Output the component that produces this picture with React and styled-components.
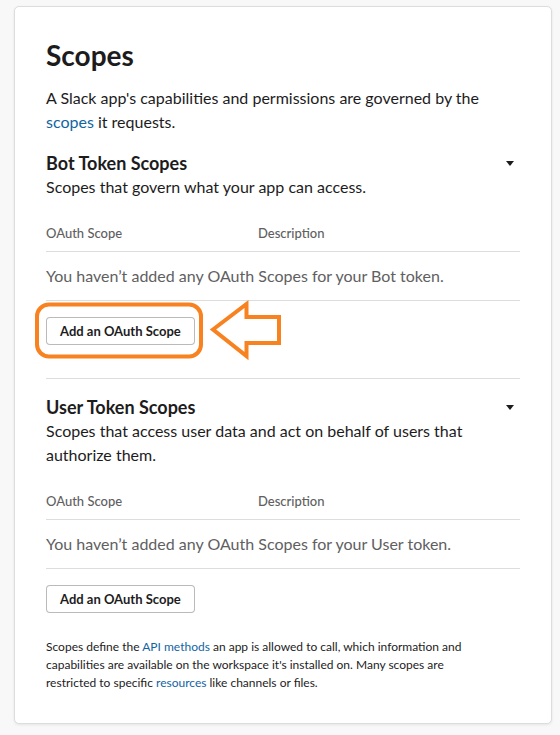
import React from "react";
import styled, { createGlobalStyle } from "styled-components";

const Global = createGlobalStyle`
  html, body { margin: 0; padding: 0; background: #f8f8f8; }
  body { font-family: Lato, "Noto Sans", sans-serif; color: #1d1c1d; -webkit-font-smoothing: antialiased; }
  #root { padding: 6px 8px 14px 14px; }
`;

const Card = styled.div`
  width: 538px;
  box-sizing: border-box;
  background: #fff;
  border: 1px solid #dddddd;
  border-radius: 5px;
  box-shadow: 0 1px 3px rgba(0, 0, 0, 0.08);
  padding: 31px 31px 31px 31px;
`;

const Title = styled.h1`
  margin: 0;
  font-size: 28px;
  line-height: 34px;
  font-weight: 700;
`;

const Intro = styled.p`
  margin: 14px 0 0;
  font-size: 16px;
  line-height: 24px;
`;

const Link = styled.a`
  color: #1264a3;
  text-decoration: none;
`;

const Section = styled.section`
  padding: ${(p) => (p.$first ? "17px" : "16px")} 0 ${(p) => (p.$last ? "25px" : "33px")};
  border-top: ${(p) => (p.$first ? "none" : "1px solid #dddddd")};
`;

const SectionHead = styled.div`
  display: flex;
  align-items: center;
  justify-content: space-between;
`;

const Heading = styled.h2`
  margin: 0;
  font-size: 18px;
  line-height: 24px;
  font-weight: 700;
`;

const Caret = styled.span`
  width: 0;
  height: 0;
  margin-right: 6px;
  border-left: 4.5px solid transparent;
  border-right: 4.5px solid transparent;
  border-top: 5.5px solid #1d1c1d;
`;

const Sub = styled.p`
  margin: 0;
  font-size: 16px;
  line-height: 24px;
`;

const Table = styled.div`
  margin-top: 25px;
`;

const HeadRow = styled.div`
  display: grid;
  grid-template-columns: 212px 1fr;
  font-size: 13px;
  line-height: 18px;
  font-weight: 500;
  color: #616061;
  padding-bottom: 9px;
  border-bottom: 1px solid #dddddd;
`;

const EmptyRow = styled.div`
  font-size: 16px;
  line-height: 24px;
  color: #616061;
  padding: 12px 0;
  border-bottom: 1px solid #dddddd;
`;

const ButtonRow = styled.div`
  position: relative;
  margin-top: 16px;
  display: flex;
`;

const Button = styled.button`
  font-family: Lato, "Noto Sans", sans-serif;
  font-size: 13px;
  font-weight: 700;
  color: #1d1c1d;
  height: 28px;
  padding: 0 13px;
  background: #fff;
  border: 1px solid rgba(29, 28, 29, 0.3);
  border-radius: 4px;
  cursor: pointer;
`;

const Annotation = styled.svg`
  position: absolute;
  left: -16px;
  top: -22px;
  width: 260px;
  height: 70px;
  overflow: visible;
  pointer-events: none;
`;

const Footer = styled.p`
  margin: 0;
  max-width: 440px;
  font-size: 12px;
  line-height: 18px;
`;

function ScopeSection({ first, last, title, desc, token, annotated }) {
  return (
    <Section $first={first} $last={last}>
      <SectionHead>
        <Heading>{title}</Heading>
        <Caret />
      </SectionHead>
      <Sub>{desc}</Sub>
      <Table>
        <HeadRow>
          <span>OAuth Scope</span>
          <span>Description</span>
        </HeadRow>
        <EmptyRow>You haven’t added any OAuth Scopes for your {token} token.</EmptyRow>
      </Table>
      <ButtonRow>
        <Button>Add an OAuth Scope</Button>
        {annotated && (
          <Annotation viewBox="0 0 260 70">
            <rect x="7" y="9.5" width="164" height="52" rx="12" ry="12" fill="none" stroke="#f7821f" strokeWidth="4" />
            <polygon
              points="183,34.5 216.5,9 216.5,22 249,22 249,48 216.5,48 216.5,61"
              fill="none"
              stroke="#f7821f"
              strokeWidth="4"
              strokeLinejoin="miter"
            />
          </Annotation>
        )}
      </ButtonRow>
    </Section>
  );
}

export default function App() {
  return (
    <>
      <Global />
      <Card>
        <Title>Scopes</Title>
        <Intro>
          A Slack app's capabilities and permissions are governed by the{" "}
          <Link href="#">scopes</Link> it requests.
        </Intro>
        <ScopeSection
          first
          title="Bot Token Scopes"
          desc="Scopes that govern what your app can access."
          token="Bot"
          annotated
        />
        <ScopeSection
          last
          title="User Token Scopes"
          desc="Scopes that access user data and act on behalf of users that authorize them."
          token="User"
        />
        <Footer>
          Scopes define the <Link href="#">API methods</Link> an app is allowed to call, which information and
          capabilities are available on the workspace it's installed on. Many scopes are restricted to specific{" "}
          <Link href="#">resources</Link> like channels or files.
        </Footer>
      </Card>
    </>
  );
}
